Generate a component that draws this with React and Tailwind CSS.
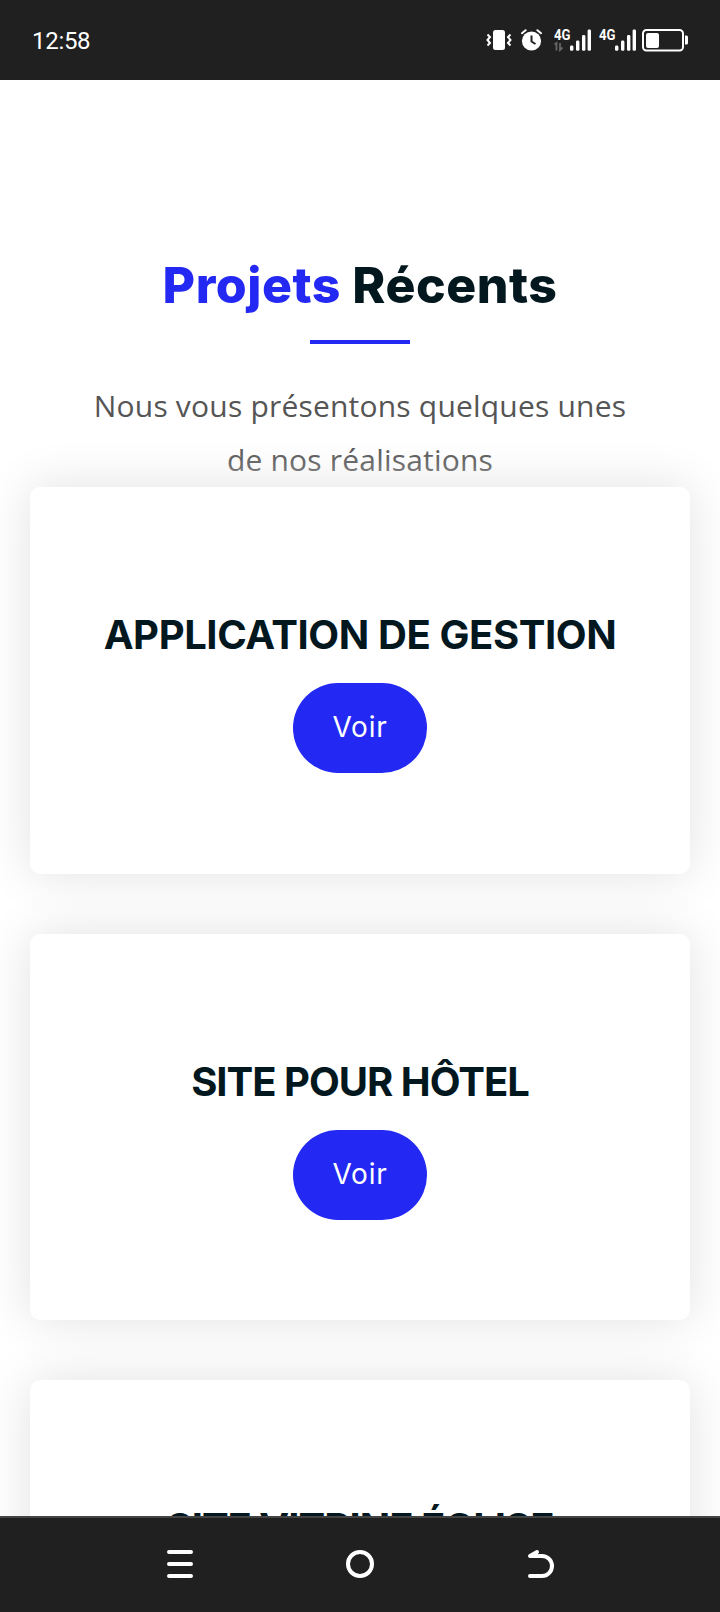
const projects = [
  { id: 1, title: "APPLICATION DE GESTION", spacing: "tracking-[-0.4px]" },
  { id: 2, title: "SITE POUR HÔTEL", spacing: "tracking-[-1px]" },
  { id: 3, title: "SITE VITRINE ÉGLISE", spacing: "tracking-[-1px]" },
];

const Signal = ({ data }) => (
  <svg width="37" height="24" viewBox="0 0 37 24" fill="#fff">
    <text x="0" y="12" fontSize="14" fontWeight="700" fontFamily="Roboto, sans-serif" textLength="16.5" lengthAdjust="spacingAndGlyphs">
      4G
    </text>
    {data && (
      <path d="M0.5 16.5 2.5 15v7.5M6 15v7l2.5-2.5" fill="none" stroke="#666" strokeWidth="1.8" />
    )}
    <rect x="16" y="17.5" width="3.4" height="5.3" rx="1.4" />
    <rect x="22" y="12.5" width="3.4" height="10.3" rx="1.4" />
    <rect x="28" y="7" width="3.4" height="15.8" rx="1.4" />
    <rect x="33.6" y="1.5" width="3.4" height="21.3" rx="1.4" />
  </svg>
);

const StatusBar = () => (
  <header className="flex h-20 shrink-0 items-center justify-between bg-[#202020] pr-[31px] pl-8 text-white">
    <span className="pt-0.5 font-[Roboto,sans-serif] text-2xl tracking-[-0.3px]">12:58</span>

    <div className="flex items-center">
      <svg width="26" height="24" viewBox="0 0 26 24" fill="#fff">
        <rect x="7" y="2" width="12" height="20" rx="2.5" />
        <path d="M1.5 6.5 4 9l-2.5 3L4 15l-2.5 2.5M24.5 6.5 22 9l2.5 3-2.5 3 2.5 2.5" fill="none" stroke="#fff" strokeWidth="2" />
      </svg>
      <svg className="ml-2" width="22" height="24" viewBox="0 0 22 24" fill="none">
        <circle cx="11.5" cy="13" r="9.6" fill="#fff" />
        <path d="M11.5 7.5v6l4 2.5" stroke="#202020" strokeWidth="2" />
        <path d="M2 5.2 5.6 2.2M21 5.2 17.4 2.2" stroke="#fff" strokeWidth="2" strokeLinecap="round" />
      </svg>
      <div className="ml-3 flex gap-2">
        <Signal data />
        <Signal />
      </div>
      <svg className="ml-1.5" width="47" height="24" viewBox="0 0 47 24" fill="none">
        <rect x="1" y="2" width="40" height="20.5" rx="3.5" stroke="#fff" strokeWidth="2" />
        <rect x="4" y="5" width="13" height="15" rx="2" fill="#fff" />
        <path d="M43 7.5h1.5a1.5 1.5 0 0 1 1.5 1.5v6a1.5 1.5 0 0 1-1.5 1.5H43z" fill="#fff" />
      </svg>
    </div>
  </header>
);

const ProjectCard = ({ project }) => (
  <article className="flex h-[386.5px] shrink-0 flex-col items-center rounded-[10px] bg-white pt-[124px] shadow-[0_0_50px_#e1e1e1]">
    <h3 className={`text-[40px] leading-[48px] font-bold whitespace-nowrap ${project.spacing}`}>
      {project.title}
    </h3>
    <button className="mt-6 h-[90px] w-[134px] shrink-0 rounded-full bg-[#2328f3] pb-0.5 text-[28px] tracking-[0.8px] text-white">
      Voir
    </button>
  </article>
);

const NavBar = () => (
  <nav className="flex h-24 shrink-0 items-center justify-center gap-[152px] border-t-2 border-[#444] bg-[#202020] pb-0.5">
    <svg width="28" height="30" viewBox="0 0 28 30" fill="none" stroke="#fff" strokeWidth="4" strokeLinecap="round">
      <path d="M3 3h22M3 15h22M3 27h22" />
    </svg>
    <svg width="28" height="30" viewBox="0 0 28 30" fill="none" stroke="#fff" strokeWidth="4">
      <circle cx="14" cy="15" r="12" />
    </svg>
    <svg width="28" height="30" viewBox="0 0 28 30" fill="none" stroke="#fff" strokeWidth="4" strokeLinecap="round" strokeLinejoin="round">
      <path d="M11 3 4 7h12a10 10 0 0 1 0 20H4" />
    </svg>
  </nav>
);

const App = () => {
  return (
    <div className="flex h-[1612px] w-[720px] flex-col overflow-hidden bg-white font-[Inter,sans-serif] text-[#03171f]">
      <StatusBar />

      <main className="flex min-h-0 flex-1 flex-col overflow-hidden px-[30px] pt-[175px]">
        <div className="flex shrink-0 flex-col items-center">
          <h2 className="text-[50px] leading-[60px] font-extrabold tracking-[0.5px] whitespace-nowrap">
            <span className="text-[#2328f3]">Projets</span> Récents
          </h2>
          <div className="mt-[25px] h-1 w-[100px] bg-[#2328f3]" />
          <p className="mt-[35px] w-[560px] text-center font-['Open_Sans',sans-serif] text-[30px] leading-[54px] tracking-[0.2px] text-[#555]">
            Nous vous présentons quelques unes de nos réalisations
          </p>
        </div>

        <div className="flex shrink-0 flex-col gap-[60px]">
          {projects.map((project) => (
            <ProjectCard key={project.id} project={project} />
          ))}
        </div>
      </main>

      <NavBar />
    </div>
  );
};

export default App;
